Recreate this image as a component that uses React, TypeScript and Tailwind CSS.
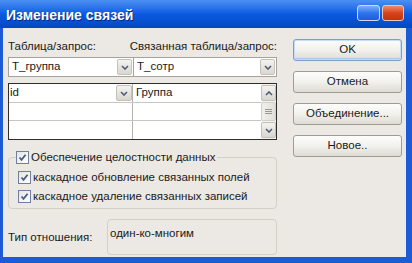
import React from "react";

const font = { fontFamily: '"Liberation Sans", Arial, sans-serif' };

const Chevron = ({ up = false }: { up?: boolean }) => (
  <svg width="8" height="5" viewBox="0 0 8 5" className={up ? "rotate-180" : ""}>
    <path d="M1 1 L4 4 L7 1" fill="none" stroke="#4d5b78" strokeWidth="1.6" />
  </svg>
);

const ArrowButton = ({ up = false, className = "" }: { up?: boolean; className?: string }) => (
  <div
    className={`flex items-center justify-center rounded-[2px] border border-[#c3c1ba] bg-gradient-to-b from-[#f4f3ef] to-[#d9d6cf] ${className}`}
  >
    <Chevron up={up} />
  </div>
);

const Check = ({ className = "" }: { className?: string }) => (
  <div
    className={`flex h-[13px] w-[13px] shrink-0 items-center justify-center border border-[#6f7f9c] bg-gradient-to-br from-[#e4e4e0] to-[#ffffff] ${className}`}
  >
    <svg width="9" height="9" viewBox="0 0 9 9">
      <path d="M1.5 4.5 L3.5 6.8 L7.6 1.8" fill="none" stroke="#4a5c8c" strokeWidth="1.8" />
    </svg>
  </div>
);

const Combo = ({ text, className = "" }: { text: string; className?: string }) => (
  <div className={`flex h-[20px] items-stretch border border-[#a5a39c] bg-white ${className}`}>
    <div className="flex flex-1 items-center pl-[3px] text-[11.5px] text-[#1a1a1a]">{text}</div>
    <ArrowButton className="m-[1px] w-[15px]" />
  </div>
);

const DlgButton = ({ label, focused = false }: { label: string; focused?: boolean }) => (
  <button
    className={`flex h-[22px] w-full items-center justify-center rounded-[3px] border bg-gradient-to-b from-[#fdfdfc] via-[#f2f1ed] to-[#dedbd4] text-[11.5px] text-[#1a1a1a] ${
      focused
        ? "border-[#7f9ec4] shadow-[inset_0_0_0_1px_#c5dcf6,inset_0_-1px_0_1px_#a9c8ee]"
        : "border-[#9e9c96]"
    }`}
  >
    {label}
  </button>
);

export default function App() {
  return (
    <div className="flex h-[263px] w-[412px] flex-col whitespace-nowrap bg-[#1d5ad6]" style={font}>
      {/* title bar */}
      <div className="flex h-[28px] items-start bg-gradient-to-b from-[#4b90f2] via-[#0a5ae2] to-[#0448c2]">
        <div className="pl-[6px] pt-[7px] text-[14px] font-bold leading-[16px] text-white [text-shadow:1px_1px_0_#0a2a80]">
          Изменение связей
        </div>
        <div className="flex-1" />
        <div className="flex gap-[2px] pr-[8px] pt-[5px]">
          <div className="h-[16px] w-[23px] rounded-[3px] border border-[#c8daf8] bg-gradient-to-b from-[#7cb0f8] via-[#2f74ea] to-[#1c5fd8]" />
          <div className="h-[16px] w-[22px] rounded-[3px] border border-[#e8c8b8] bg-gradient-to-b from-[#f08a60] via-[#d8431c] to-[#c2330e]" />
        </div>
      </div>

      {/* body */}
      <div className="mb-[6px] ml-[3px] mr-[6px] flex flex-1 bg-[#ece9e4]">
        {/* left column */}
        <div className="ml-[5px] flex w-[269px] flex-col pt-[11px]">
          <div className="flex text-[11.5px] leading-[14px] text-[#1a1a1a]">
            <div className="w-[126px]">Таблица/запрос:</div>
            <div>Связанная таблица/запрос:</div>
          </div>

          <div className="mt-[4px] flex">
            <Combo text="Т_группа" className="w-[126px]" />
            <Combo text="Т_сотр" className="-ml-px flex-1" />
          </div>

          {/* fields grid */}
          <div className="mt-[6px] flex h-[57px] border border-[#2e2e2e] bg-white">
            <div className="flex flex-1 flex-col text-[11.5px] text-[#1a1a1a]">
              <div className="flex h-[19px] border-b border-[#c8c6c0]">
                <div className="flex w-[124px] items-center justify-between border-r border-[#b4b2ac] pl-[1px]">
                  <span>id</span>
                  <ArrowButton className="h-[16px] w-[16px]" />
                </div>
                <div className="flex flex-1 items-center pl-[3px]">Группа</div>
              </div>
              <div className="flex h-[18px] border-b border-[#c8c6c0]">
                <div className="w-[124px] border-r border-[#b4b2ac]" />
                <div className="flex-1" />
              </div>
              <div className="flex flex-1">
                <div className="w-[124px] border-r border-[#b4b2ac]" />
                <div className="flex-1" />
              </div>
            </div>
            {/* scrollbar */}
            <div className="flex w-[15px] flex-col gap-[1px] bg-[#f3f2ee] py-[1px]">
              <ArrowButton up className="h-[16px]" />
              <div className="flex flex-1 items-center justify-center rounded-[2px] border border-[#d2d0ca] bg-gradient-to-r from-[#f1f0ec] to-[#e2e0da]">
                <svg width="7" height="6" viewBox="0 0 7 6">
                  <path d="M0 0.5 H7 M0 2.5 H7 M0 4.5 H7" stroke="#9a9890" strokeWidth="1" />
                </svg>
              </div>
              <ArrowButton className="h-[16px]" />
            </div>
          </div>

          {/* referential integrity group */}
          <fieldset className="mt-[10px] rounded-[4px] border border-[#d3d0c6] px-[7px] pb-[5px] pt-[6px]">
            <legend className="flex items-center gap-[2px] bg-[#ece9e4] pr-[2px] text-[11.5px] leading-[14px] text-[#1a1a1a]">
              <Check />
              <span>Обеспечение целостности данных</span>
            </legend>
            <div className="flex flex-col gap-[5px] pl-[2px] text-[11.5px] leading-[14px] text-[#1a1a1a]">
              <div className="flex items-center gap-[2px]">
                <Check />
                <span>каскадное обновление связанных полей</span>
              </div>
              <div className="flex items-center gap-[2px]">
                <Check />
                <span>каскадное удаление связанных записей</span>
              </div>
            </div>
          </fieldset>

          {/* relationship type */}
          <div className="mt-[10px] flex h-[36px] text-[11.5px] leading-[14px] text-[#1a1a1a]">
            <div className="flex w-[99px] items-center">Тип отношения:</div>
            <div className="flex-1 rounded-[4px] border border-[#d3d0c6] pl-[2px] pt-[6px]">один-ко-многим</div>
          </div>
        </div>

        {/* right column */}
        <div className="ml-[16px] flex w-[109px] flex-col gap-[10px] pt-[11px]">
          <DlgButton label="OK" focused />
          <DlgButton label="Отмена" />
          <DlgButton label="Объединение..." />
          <DlgButton label="Новое.." />
        </div>
      </div>
    </div>
  );
}
